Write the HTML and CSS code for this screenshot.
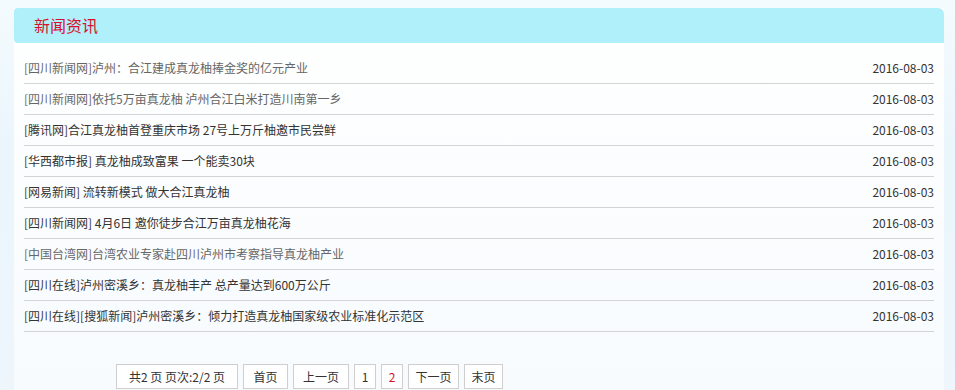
FILE: index.html
```html
<!DOCTYPE html>
<html lang="zh-CN">
<head>
<meta charset="utf-8">
<title>新闻资讯</title>
<link rel="stylesheet" href="styles.css">
</head>
<body>
<div class="panel">
  <div class="head"><span class="title">新闻资讯</span></div>
  <ul class="news">
    <li class="row visited"><a>[四川新闻网]泸州：合江建成真龙柚捧金奖的亿元产业</a><span class="date">2016-08-03</span></li>
    <li class="row visited"><a>[四川新闻网]依托5万亩真龙柚 泸州合江白米打造川南第一乡</a><span class="date">2016-08-03</span></li>
    <li class="row"><a>[腾讯网]合江真龙柚首登重庆市场 27号上万斤柚邀市民尝鲜</a><span class="date">2016-08-03</span></li>
    <li class="row"><a>[华西都市报] 真龙柚成致富果 一个能卖30块</a><span class="date">2016-08-03</span></li>
    <li class="row"><a>[网易新闻] 流转新模式 做大合江真龙柚</a><span class="date">2016-08-03</span></li>
    <li class="row"><a>[四川新闻网] 4月6日 邀你徒步合江万亩真龙柚花海</a><span class="date">2016-08-03</span></li>
    <li class="row visited"><a>[中国台湾网]台湾农业专家赴四川泸州市考察指导真龙柚产业</a><span class="date">2016-08-03</span></li>
    <li class="row"><a>[四川在线]泸州密溪乡：真龙柚丰产 总产量达到600万公斤</a><span class="date">2016-08-03</span></li>
    <li class="row"><a>[四川在线][搜狐新闻]泸州密溪乡：倾力打造真龙柚国家级农业标准化示范区</a><span class="date">2016-08-03</span></li>
  </ul>
  <div class="pager">
    <span class="pg info">共2 页 页次:2/2 页</span>
    <a class="pg w45">首页</a>
    <a class="pg w56">上一页</a>
    <a class="pg w22">1</a>
    <span class="pg w22 cur">2</span>
    <a class="pg w51">下一页</a>
    <a class="pg w39">末页</a>
  </div>
</div>
</body>
</html>
```
FILE: styles.css
```css
html, body {
  margin: 0;
  padding: 0;
}
body {
  width: 955px;
  height: 390px;
  overflow: hidden;
  background: linear-gradient(to bottom, #f4fbfe 0%, #eaf5fc 40%, #eef6fc 100%);
  font-family: "Microsoft YaHei", "Noto Sans CJK SC", "Noto Sans", sans-serif;
  font-size: 12px;
  color: #333;
}
.panel {
  margin: 8px 0 0 14px;
  width: 930px;
  height: 382px;
  background: linear-gradient(to bottom, #ffffff 0%, #fbfdfe 50%, #f7fbfe 100%);
}
.head {
  height: 35px;
  background: #b0f0fb;
  border-radius: 4px 6px 0 4px;
  display: flex;
  align-items: center;
  padding-left: 20px;
}
.title {
  color: #d8102a;
  font-size: 16px;
  line-height: 35px;
}
.news {
  list-style: none;
  margin: 10px 10px 0 10px;
  padding: 0;
}
.row {
  display: flex;
  justify-content: space-between;
  align-items: center;
  height: 30px;
  border-bottom: 1px solid #d4d4d4;
  line-height: 30px;
}
.row a {
  color: #333;
}
.row.visited a {
  color: #666;
}
.date {
  color: #333;
}
.pager {
  display: flex;
  gap: 5px;
  margin: 32px 0 0 102px;
}
.pg {
  display: block;
  box-sizing: border-box;
  height: 25px;
  line-height: 23px;
  border: 1px solid #cfcfcf;
  padding: 0;
  text-align: center;
  color: #333;
  background: #fff;
}
.pg.info { width: 122px; }
.w45 { width: 45px; }
.w56 { width: 56px; }
.w22 { width: 22px; }
.w51 { width: 51px; }
.w39 { width: 39px; }
.pg.cur {
  color: #d8102a;
}
```
